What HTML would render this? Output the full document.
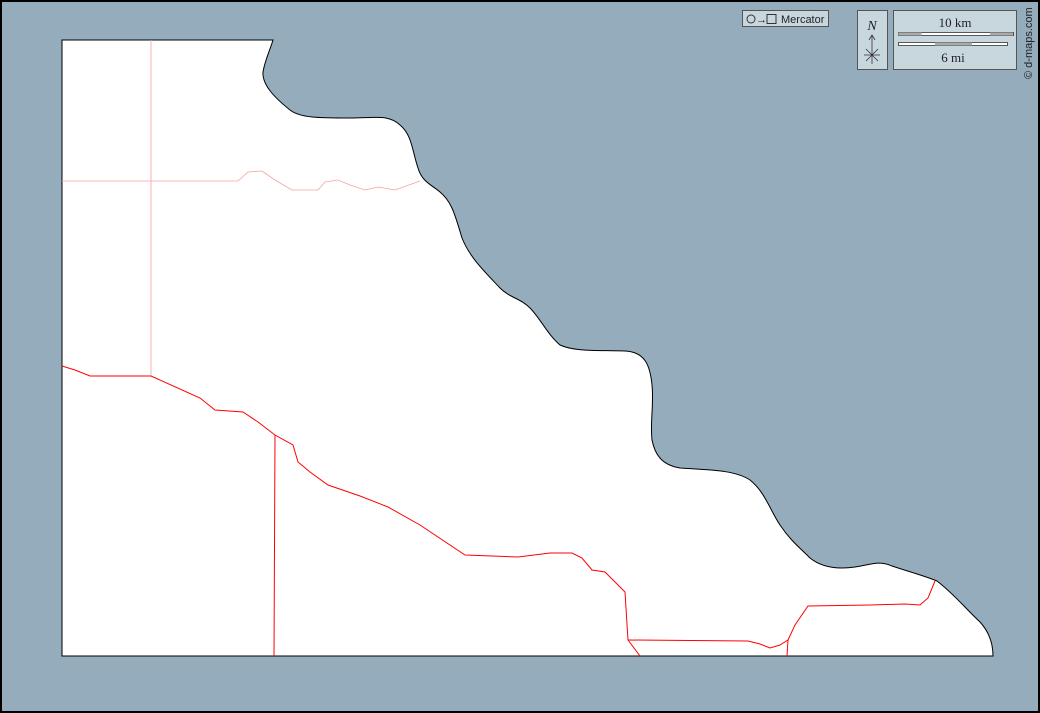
<!DOCTYPE html>
<html><head><meta charset="utf-8"><style>
html,body{margin:0;padding:0;width:1040px;height:713px;overflow:hidden;background:#000}
svg{display:block}
</style></head><body>
<svg width="1040" height="713" xmlns="http://www.w3.org/2000/svg">
<rect x="2" y="2" width="1036" height="709" fill="#94acbb"/>
<path d="M62,40 L273,40 C270,50 265,60 263,72 C262,85 275,98 290,110 C300,118 320,118 350,118 C375,118 388,114 400,125 C412,135 412,150 418,168 C422,182 432,185 440,192 C452,202 455,215 462,238 C470,258 485,272 500,288 C510,298 520,298 530,308 C540,318 548,335 560,345 C575,352 600,350 625,351 C645,352 650,365 652,385 C654,405 650,420 652,440 C655,455 662,465 680,468 C710,470 735,470 750,480 C765,492 770,510 780,525 C790,540 800,548 810,558 C820,566 835,570 855,567 C870,565 878,560 892,566 C910,572 925,576 937,581 C955,595 965,608 980,622 C990,633 993,645 993,656 L62,656 Z" fill="#fff" stroke="#000" stroke-width="1"/>
<g fill="none" stroke="#f6a0a0" stroke-width="0.8">
<path d="M151,40 L151,376"/>
<path d="M62,181 L238,181 L248,172 L262,171 L275,180 L292,190 L318,190 L325,182 L338,180 L350,185 L365,190 L378,187 L395,190 L420,181"/>
</g>
<g fill="none" stroke="#f00" stroke-width="1">
<path d="M62,366 L75,370 L90,376 L151,376 L200,398 L215,410 L243,412 L258,422 L275,435 L293,445 L298,462 L310,472 L328,485 L360,496 L388,507 L420,525 L465,555 L518,557 L550,553 L572,553 L582,558 L592,570 L605,572 L625,592 L628,640 L640,656"/>
<path d="M275,435 L274,656"/>
<path d="M628,640 L748,641 L760,644 L770,648 L780,645 L788,640 L787,656"/>
<path d="M788,640 L795,625 L808,606 L870,605 L905,604 L920,605 L928,598 L935,581"/>
</g>
<rect x="1" y="1" width="1038" height="711" fill="none" stroke="#000" stroke-width="2"/>
<rect x="742.5" y="10.5" width="86" height="16" fill="#c8d6de" stroke="#555"/>
<circle cx="751" cy="19" r="4" fill="none" stroke="#333"/>
<text x="756" y="23" font-family="Liberation Sans,DejaVu Sans,sans-serif" font-size="11" fill="#222">→</text>
<rect x="767" y="14.5" width="9" height="9" fill="none" stroke="#333"/>
<text x="781" y="23" font-family="Liberation Sans,sans-serif" font-size="11" fill="#222">Mercator</text>
<rect x="857.5" y="10.5" width="30" height="59" fill="#c8d6de" stroke="#555"/>
<text x="872" y="30" font-family="Liberation Serif,serif" font-style="italic" font-size="14" text-anchor="middle" fill="#222">N</text>
<path d="M872,36 L872,64 M869,40 L872,35 L875,40 M864,55 L880,55 M866,49 L878,61 M878,49 L866,61" stroke="#333" fill="none" stroke-width="0.8"/>
<rect x="893.5" y="10.5" width="123" height="59" fill="#c8d6de" stroke="#555"/>
<text x="955" y="27" font-family="Liberation Serif,serif" font-size="13" text-anchor="middle" fill="#222">10 km</text>
<rect x="898.5" y="32.5" width="115" height="3" fill="#fff" stroke="#333" stroke-width="0.8"/>
<rect x="898.5" y="32.5" width="23" height="3" fill="#aaa"/><rect x="990" y="32.5" width="23" height="3" fill="#aaa"/>
<rect x="898.5" y="42.5" width="109" height="3" fill="#fff" stroke="#333" stroke-width="0.8"/>
<rect x="935" y="42.5" width="37" height="3" fill="#aaa"/>
<text x="953" y="62" font-family="Liberation Serif,serif" font-size="13" text-anchor="middle" fill="#222">6 mi</text>
<text transform="translate(1032,79) rotate(-90)" font-family="Liberation Sans,sans-serif" font-size="11" fill="#222">© d-maps.com</text>
</svg>
</body></html>
